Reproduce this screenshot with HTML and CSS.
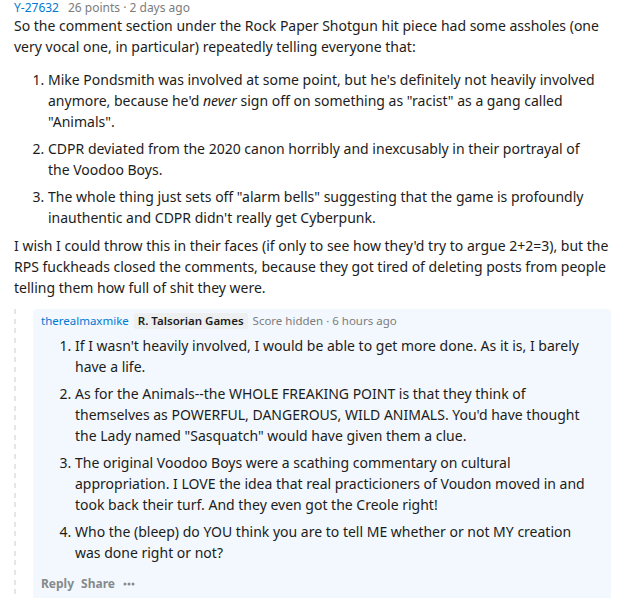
FILE: index.html
```html
<!DOCTYPE html>
<html lang="en">
    <head>
        <title>Comment thread</title>
        <meta charset="utf-8">
        <meta name="viewport" content="width=device-width, initial-scale=1.0">
        <link rel="stylesheet" href="styles.css">
    </head>
    <body>
        <div class="comment">
            <div class="meta">
                <a class="user" href="#">Y-27632</a>
                <span class="info">26 points · 2 days ago</span>
            </div>

            <div class="text">
                <p>So the comment section under the Rock Paper Shotgun hit piece had some assholes (one very vocal one, in particular) repeatedly telling everyone that:</p>
                <ol>
                    <li>Mike Pondsmith was involved at some point, but he's definitely not heavily involved anymore, because he'd <em>never</em> sign off on something as "racist" as a gang called "Animals".</li>
                    <li>CDPR deviated from the 2020 canon horribly and inexcusably in their portrayal of the Voodoo Boys.</li>
                    <li>The whole thing just sets off "alarm bells" suggesting that the game is profoundly inauthentic and CDPR didn't really get Cyberpunk.</li>
                </ol>
                <p>I wish I could throw this in their faces (if only to see how they'd try to argue 2+2=3), but the RPS fuckheads closed the comments, because they got tired of deleting posts from people telling them how full of shit they were.</p>
            </div>

            <div class="replies">
                <div class="thread-line"></div>
                <div class="reply">
                    <div class="meta">
                        <a class="user" href="#">therealmaxmike</a>
                        <span class="flair">R. Talsorian Games</span>
                        <span class="info">Score hidden · 6 hours ago</span>
                    </div>
                    <div class="text">
                        <ol>
                            <li>If I wasn't heavily involved, I would be able to get more done. As it is, I barely have a life.</li>
                            <li>As for the Animals--the WHOLE FREAKING POINT is that they think of themselves as POWERFUL, DANGEROUS, WILD ANIMALS. You'd have thought the Lady named "Sasquatch" would have given them a clue.</li>
                            <li>The original Voodoo Boys were a scathing commentary on cultural appropriation. I LOVE the idea that real practicioners of Voudon moved in and took back their turf. And they even got the Creole right!</li>
                            <li>Who the (bleep) do YOU think you are to tell ME whether or not MY creation was done right or not?</li>
                        </ol>
                    </div>
                    <div class="actions">
                        <span>Reply</span>
                        <span>Share</span>
                        <svg class="more" width="12" height="4" viewBox="0 0 12 4"><circle cx="2" cy="2" r="1.5"/><circle cx="6" cy="2" r="1.5"/><circle cx="10" cy="2" r="1.5"/></svg>
                    </div>
                </div>
            </div>
        </div>
    </body>
</html>
```

FILE: styles.css
```css
body {
    margin: 0;
    background: white;
    color: #1c1c1c;
    font-family: "Noto Sans", "Open Sans", sans-serif;
    font-size: 14px;
    line-height: 21px;
}
.comment {
    padding: 0 8px 0 14px;
}
.meta {
    display: flex;
    align-items: center;
    gap: 5px;
    font-size: 12px;
    line-height: 16px;
    height: 15px;
}
.user {
    color: #0079d3;
    text-decoration: none;
    margin-right: 4px;
}
.info {
    color: #7c7c7c;
}
.flair {
    background: #edeff1;
    color: #1c1c1c;
    font-weight: 600;
    padding: 0 4px;
    border-radius: 2px;
}
.text p {
    margin: 0;
}
.text ol {
    margin: 12px 0 7px;
    padding: 0 16px 0 34px;
}
.text li + li {
    margin-top: 6px;
}
.replies {
    display: flex;
    gap: 17px;
    margin-top: 11px;
}
.thread-line {
    width: 2px;
    flex: none;
    background: repeating-linear-gradient(to bottom, #e3e5e7 0 5px, transparent 5px 9.67px);
}
.reply {
    flex: 1;
    background: #f2f8fd;
    border-radius: 4px;
    padding: 4px 8px 8px;
}
.reply .meta {
    height: 16px;
    font-size: 11.5px;
}
.reply .meta .user {
    margin-right: 0;
}
.reply .text ol {
    margin: 6px 0 0;
}
.actions {
    display: flex;
    align-items: center;
    gap: 7px;
    margin-top: 13px;
    font-size: 12px;
    line-height: 16px;
    font-weight: 700;
    color: #878a8c;
}
.more {
    fill: #878a8c;
    margin-left: 1px;
}
```
